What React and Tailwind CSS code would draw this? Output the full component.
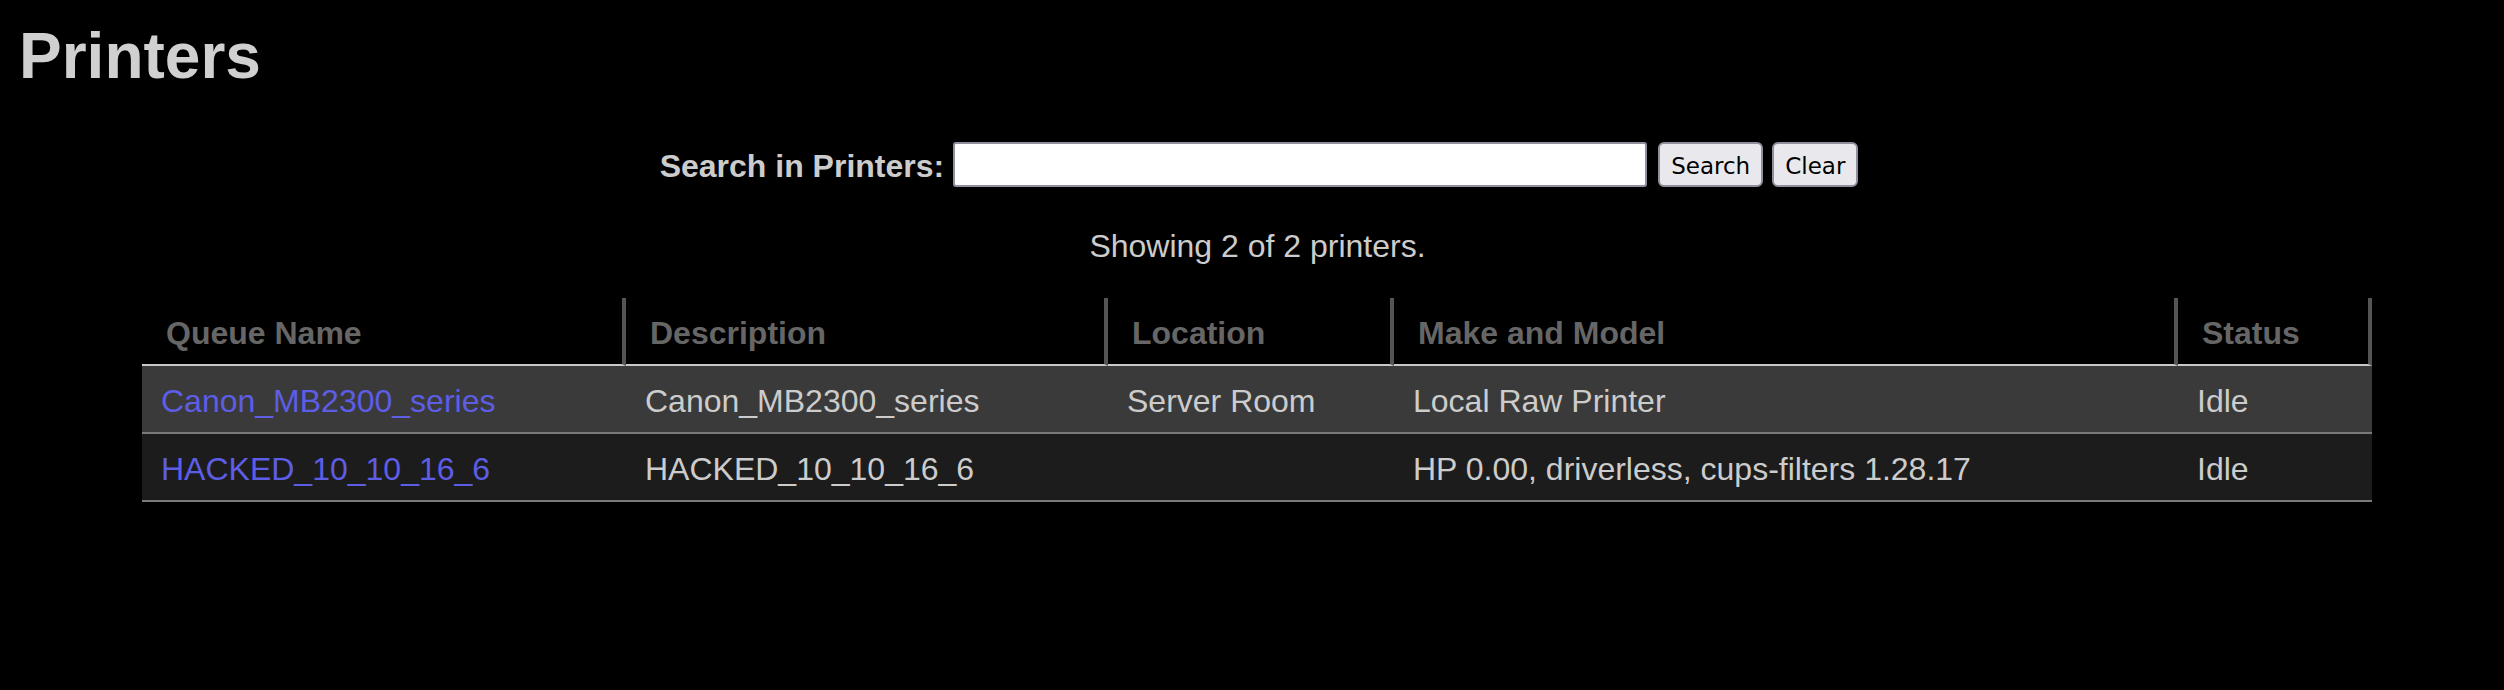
import React from "react";

const rows = [
  {
    name: "Canon_MB2300_series",
    desc: "Canon_MB2300_series",
    loc: "Server Room",
    model: "Local Raw Printer",
    status: "Idle",
    bg: "bg-[#3a3a3a]",
  },
  {
    name: "HACKED_10_10_16_6",
    desc: "HACKED_10_10_16_6",
    loc: "",
    model: "HP 0.00, driverless, cups-filters 1.28.17",
    status: "Idle",
    bg: "bg-[#1c1c1c]",
  },
];

export default function App() {
  return (
    <div
      className="min-h-[690px] w-full bg-black text-[#cccccc] overflow-hidden"
      style={{ fontFamily: '"Liberation Sans", Arial, sans-serif' }}
    >
      <h1 className="ml-[19px] pt-[20px] text-[64px] leading-[72px] font-bold text-[#d0d0d0]">
        Printers
      </h1>

      <form
        className="mt-[50px] flex items-center justify-center h-[45px] pl-[14px]"
        onSubmit={(e) => e.preventDefault()}
      >
        <label className="text-[32px] leading-[45px] pt-[3px] font-bold text-[#cccccc] mr-[9px]">
          Search in Printers:
        </label>
        <input
          type="text"
          className="w-[694px] h-[45px] bg-white border-2 border-[#8f8f9d] rounded-[3px] outline-none"
        />
        <button
          type="button"
          className="ml-[11px] h-[45px] pt-[3px] px-[11px] bg-[#e9e9ed] border-2 border-[#8f8f9d] rounded-[6px] text-black text-[23px]"
          style={{ fontFamily: '"DejaVu Sans", sans-serif' }}
        >
          Search
        </button>
        <button
          type="button"
          className="ml-[9px] h-[45px] pt-[3px] px-[11px] bg-[#e9e9ed] border-2 border-[#8f8f9d] rounded-[6px] text-black text-[23px]"
          style={{ fontFamily: '"DejaVu Sans", sans-serif' }}
        >
          Clear
        </button>
      </form>

      <p className="mt-[39px] pl-[11px] text-center text-[32px] leading-[40px] text-[#cccccc]">
        Showing 2 of 2 printers.
      </p>

      <table className="ml-[142px] mt-[32px] w-[2230px] table-fixed border-separate border-spacing-0 text-[32px]">
        <colgroup>
          <col className="w-[484px]" />
          <col className="w-[482px]" />
          <col className="w-[286px]" />
          <col className="w-[784px]" />
          <col className="w-[194px]" />
        </colgroup>
        <thead>
          <tr>
            {["Queue Name", "Description", "Location", "Make and Model", "Status"].map((h) => (
              <th
                key={h}
                className="h-[68px] pt-[4px] text-left align-middle pl-[24px] font-bold text-[#666666] border-r-4 border-r-[#555555] border-b-2 border-b-[#c8c8c8]"
              >
                {h}
              </th>
            ))}
          </tr>
        </thead>
        <tbody>
          {rows.map((r) => (
            <tr key={r.name} className={r.bg}>
              <td className="h-[68px] pt-[4px] pl-[19px] border-b-2 border-b-[#7a7a7a] align-middle">
                <a href="#" className="text-[#5d5de6]">
                  {r.name}
                </a>
              </td>
              <td className="pt-[4px] pl-[19px] border-b-2 border-b-[#7a7a7a] align-middle">{r.desc}</td>
              <td className="pt-[4px] pl-[19px] border-b-2 border-b-[#7a7a7a] align-middle">{r.loc}</td>
              <td className="pt-[4px] pl-[19px] border-b-2 border-b-[#7a7a7a] align-middle">{r.model}</td>
              <td className="pt-[4px] pl-[19px] border-b-2 border-b-[#7a7a7a] align-middle">{r.status}</td>
            </tr>
          ))}
        </tbody>
      </table>
    </div>
  );
}
